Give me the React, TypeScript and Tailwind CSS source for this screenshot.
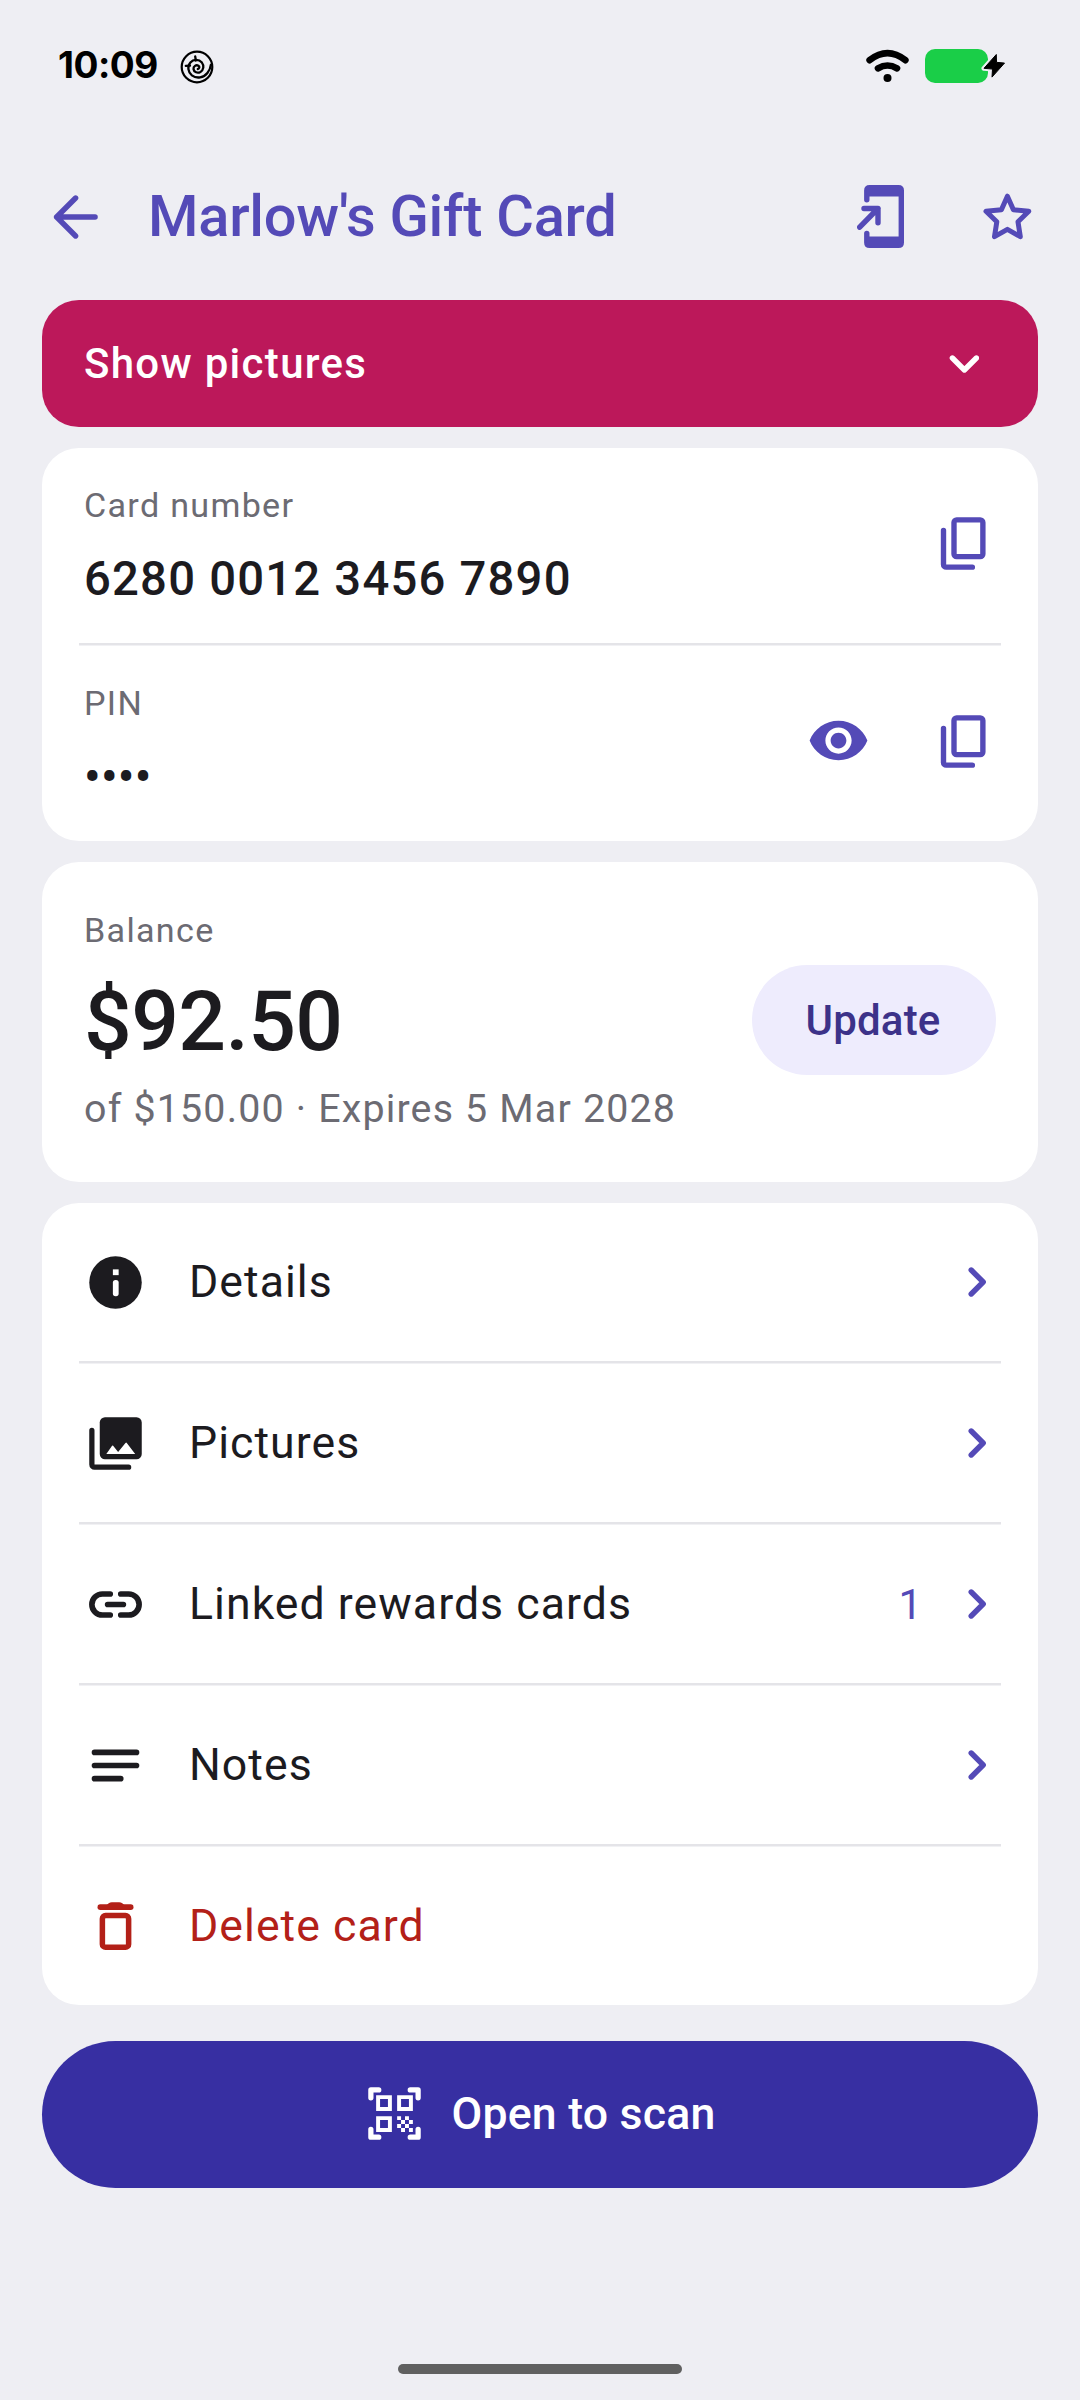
import type { ReactNode } from "react";

const menuItems = [
  { label: "Details", icon: <InfoIcon /> },
  { label: "Pictures", icon: <PicturesIcon /> },
  { label: "Linked rewards cards", icon: <LinkIcon />, count: 1 },
  { label: "Notes", icon: <NotesIcon /> },
];

function InfoIcon() {
  return (
    <svg viewBox="0 0 24 24" className="size-[63px]" fill="currentColor">
      <circle cx="12" cy="12" r="10" />
      <rect x="11" y="7" width="2.2" height="2.2" fill="white" />
      <rect x="11" y="11" width="2.2" height="6.2" rx="1" fill="white" />
    </svg>
  );
}

function PicturesIcon() {
  return (
    <svg viewBox="0 0 24 24" className="size-[63px]" fill="currentColor">
      <path d="M8 2h12a2 2 0 0 1 2 2v12a2 2 0 0 1-2 2H8a2 2 0 0 1-2-2V4a2 2 0 0 1 2-2z" />
      <path d="M3 7v13a1 1 0 0 0 1 1h13" fill="none" stroke="currentColor" strokeWidth="2" strokeLinecap="round" />
      <path d="M8.5 16l2.2-3.1q.2-.3.4 0l1.9 2.3 2.8-3.4q.3-.3.5 0L19.5 16z" fill="white" />
    </svg>
  );
}

function LinkIcon() {
  return (
    <svg viewBox="0 0 24 24" className="size-[63px]" fill="none" stroke="currentColor" strokeWidth="2.15" strokeLinecap="round">
      <path d="M10 8H7a4 4 0 0 0 0 8h3M14 8h3a4 4 0 0 1 0 8h-3M9 12h6" />
    </svg>
  );
}

function NotesIcon() {
  return (
    <svg viewBox="0 0 24 24" className="size-[63px]" fill="none" stroke="currentColor" strokeWidth="2.15" strokeLinecap="round">
      <path d="M4 7h16M4 12h16M4 17h10" />
    </svg>
  );
}

function TrashIcon() {
  return (
    <svg viewBox="0 0 24 24" className="mb-0.5 size-[63px]" fill="none" stroke="currentColor" strokeWidth="2.1" strokeLinecap="round">
      <rect x="7" y="8.2" width="10" height="12.1" rx="1.2" />
      <path d="M6.2 5h11.6" />
      <path d="M8.6 4.3l.8-.8q.6-.4 1.2-.4h2.8q.6 0 1.2.4l.8.8z" fill="currentColor" stroke="none" />
    </svg>
  );
}

function CopyIcon() {
  return (
    <svg viewBox="0 0 24 24" className="size-[63px]" fill="none" stroke="currentColor" strokeWidth="2.05" strokeLinecap="round">
      <rect x="8" y="3" width="11" height="14" rx="1" />
      <path d="M4 7v13a1 1 0 0 0 1 1h10" />
    </svg>
  );
}

function EyeIcon() {
  return (
    <svg viewBox="0 0 24 24" className="mb-0.5 size-[63px]" fill="currentColor">
      <path d="M12 4.5C7 4.5 2.73 7.61 1 12c1.73 4.39 6 7.5 11 7.5s9.27-3.11 11-7.5c-1.73-4.39-6-7.5-11-7.5zM12 17c-2.76 0-5-2.24-5-5s2.24-5 5-5 5 2.24 5 5-2.24 5-5 5zm0-8c-1.66 0-3 1.34-3 3s1.34 3 3 3 3-1.34 3-3-1.34-3-3-3z" />
    </svg>
  );
}

function ScanIcon() {
  return (
    <svg viewBox="0 0 24 24" className="size-[63px]" fill="currentColor">
      <path
        d="M3 6V3h3M18 3h3v3M21 18v3h-3M6 21H3v-3"
        fill="none"
        stroke="currentColor"
        strokeWidth="2"
        strokeLinecap="round"
        strokeLinejoin="round"
      />
      <path d="M9.5 6.5v3h-3v-3h3M11 5H5v6h6V5zm-1.500 9.500v3h-3v-3h3M11 13H5v6h6v-6zm6.500-6.500v3h-3v-3h3M19 5h-6v6h6V5z" />
      <path d="M13 13h1.5v1.5H13zM14.5 14.5H16V16h-1.5zM16 13h1.5v1.5H16zM13 16h1.5v1.5H13zM14.5 17.5H16V19h-1.5zM16 16h1.5v1.5H16zM17.5 14.5H19V16h-1.5zM17.5 17.5H19V19h-1.5z" />
    </svg>
  );
}

function ChevronRight() {
  return (
    <svg viewBox="0 0 18 30" className="mr-[10px] h-[30px] w-[18px] text-[#544ab7]" fill="none" stroke="currentColor" strokeWidth="5.4" strokeLinecap="round" strokeLinejoin="round">
      <path d="M3.2 3l12 12-12 12" />
    </svg>
  );
}

function StatusBar() {
  return (
    <div className="flex h-[134px] items-center pl-[58px] pr-[74px] text-black">
      <span className="mb-1 font-['Inter',sans-serif] text-[37px] leading-[44px] font-bold tracking-[-0.5px]">10:09</span>
      <svg viewBox="0 0 34 34" className="ml-[22px] size-[34px]" fill="none" stroke="currentColor" strokeLinecap="round">
        <circle cx="17" cy="17" r="15.3" strokeWidth="2.2" />
        <path
          d="M17.800 19c1.700-.2 2.100-2.300.6-3.300-2.300-1.300-5.200.6-4.900 3.300.4 3.200 4.100 4.600 6.900 3 3.300-2 3.900-6.400 1.500-9.400-3-3.500-8.500-3.600-11.500-.2-3.300 3.900-2.500 9.900 1.500 13 4.900 3.600 11.900 2.300 15.500-2.400 2.200-2.900 3.200-5.500 3.400-8"
          strokeWidth="2.3"
        />
        <path d="M10 15.600L5.800 15.900M15.800 10.500L15.200 6.300" strokeWidth="2.3" />
      </svg>
      <svg viewBox="0 0 140 34" className="mb-0.5 ml-auto h-[34px] w-[140px]" fill="none">
        <g stroke="currentColor" strokeWidth="6.6" strokeLinecap="round">
          <path d="M3.6 11.2Q21.5-2.8 39.4 11.2" />
          <path d="M12 19.3Q21.5 13.7 31 19.3" />
        </g>
        <circle cx="21.5" cy="29" r="4" fill="currentColor" />
        <rect x="59" y="0" width="63" height="34" rx="10" fill="#1ace48" />
        <path d="M130.3 5.5L118 19.3l8.5.8-.5 8 12.5-14-8-.8z" fill="#000" stroke="#eeeef3" strokeWidth="5" strokeLinejoin="round" />
        <path d="M130.3 5.5L118 19.3l8.5.8-.5 8 12.5-14-8-.8z" fill="#000" stroke="#000" strokeWidth="1" strokeLinejoin="round" />
      </svg>
    </div>
  );
}

function Header() {
  return (
    <header className="flex h-[166px] items-center pl-[53px] pr-12 text-[#544ab7]">
      <svg viewBox="0 0 45 44" className="h-[44px] w-[45px]" fill="none" stroke="currentColor" strokeWidth="5.4" strokeLinecap="round" strokeLinejoin="round">
        <path d="M22.6 3L3.6 22l19 19M3.6 22h38.5" />
      </svg>
      <h1 className="mb-0.5 ml-[50px] text-[57.75px] leading-[68px] font-medium tracking-[-0.25px]">Marlow's Gift Card</h1>
      <svg viewBox="0 0 47 63" className="mb-0.5 ml-auto h-[63px] w-[47px]" fill="none" stroke="currentColor" strokeWidth="5.4" strokeLinecap="round" strokeLinejoin="round">
        <path d="M9.8 14.8V5.5Q9.8 2.7 12.6 2.7H41.5Q44.3 2.7 44.3 5.5V57.5Q44.3 60.3 41.5 60.3H12.6Q9.8 60.3 9.8 57.5V48.5" />
        <path d="M9.8 8h34.5M9.8 55h34.5" strokeWidth="7" strokeLinecap="butt" />
        <path d="M7 23.5h14v14.2M21 23.5L2.7 42.2" />
      </svg>
      <svg viewBox="0 0 49 47" className="mb-0.5 ml-[79px] h-[47px] w-[49px]" fill="none" stroke="currentColor" strokeWidth="5" strokeLinejoin="round">
        <path d="M24.4 3.2L30.4 16.8 45.8 18.2 35 28.8 37.3 43.7 24.4 36.3 11.5 43.7 13.8 28.8 3 18.2 18.4 16.8z" />
      </svg>
    </header>
  );
}

function Divider() {
  return <div className="mx-[37px] h-[2.625px] shrink-0 border-t-2 border-[#e4e4e8] bg-[#f1f1f4]" />;
}

function Field({ label, value, children }: { label: string; value: ReactNode; children: ReactNode }) {
  return (
    <div className="flex h-[195px] items-center justify-between px-[42px]">
      <div>
        <p className="text-[34.125px] leading-[44px] tracking-[1.3px] text-[#6c6b73]">{label}</p>
        <p className="mt-[22px] text-[47.25px] leading-[60px] font-medium tracking-[1.2px]">{value}</p>
      </div>
      <div className="mb-[5px] flex items-center gap-[63px] text-[#544ab7]">{children}</div>
    </div>
  );
}

export default function App() {
  return (
    <div className="flex h-[2400px] w-[1080px] flex-col bg-[#eeeef3] font-['Roboto',sans-serif] text-[#1c1b1f]">
      <StatusBar />
      <Header />

      <main className="flex flex-col px-[42px]">
        {/* Pictures toggle */}
        <button className="flex h-[127px] items-center justify-between rounded-[37px] bg-[#bc185a] pr-[59px] pl-[42px] text-white">
          <span className="text-[42px] leading-[50px] font-medium tracking-[1.3px]">Show pictures</span>
          <svg viewBox="0 0 30 18" className="h-[18px] w-[30px]" fill="none" stroke="currentColor" strokeWidth="5.4" strokeLinecap="round" strokeLinejoin="round">
            <path d="M3.4 3l12 12 12-12" />
          </svg>
        </button>

        {/* Card number and PIN */}
        <section className="mt-[21px] h-[393px] rounded-[37px] bg-white">
          <Field label="Card number" value="6280 0012 3456 7890">
            <CopyIcon />
          </Field>
          <Divider />
          <div className="pt-px">
            <Field label="PIN" value={<span className="tracking-[0.4px]">••••</span>}>
              <EyeIcon />
              <CopyIcon />
            </Field>
          </div>
        </section>

        {/* Balance */}
        <section className="mt-[21px] flex h-[320px] items-center justify-between rounded-[37px] bg-white px-[42px]">
          <div className="mb-0.5">
            <p className="text-[34.125px] leading-[44px] tracking-[1.3px] text-[#6c6b73]">Balance</p>
            <p className="mt-[21px] text-[84px] leading-[98px] font-medium tracking-[-0.6px]">$92.50</p>
            <p className="mt-3 text-[39.375px] leading-[52px] tracking-[1.18px] text-[#6c6b73]">of $150.00 · Expires 5 Mar 2028</p>
          </div>
          <button className="mb-1 h-[110px] w-[244px] rounded-full bg-[#eeecfd] pr-0.5 text-[42px] font-medium tracking-[0.2px] text-[#3c3289]">Update</button>
        </section>

        {/* Actions */}
        <section className="mt-[21px] h-[802px] rounded-[37px] bg-white">
          {menuItems.map((item) => (
            <div key={item.label}>
              <button className="flex h-[158.4px] w-full items-center px-[42px]">
                {item.icon}
                <span className="ml-[42px] text-[44.625px] leading-[54px] tracking-[1.04px]">{item.label}</span>
                <span className="ml-auto flex items-center">
                  {item.count && <span className="mr-[46px] text-[42px] text-[#544ab7]">{item.count}</span>}
                  <ChevronRight />
                </span>
              </button>
              <Divider />
            </div>
          ))}
          <button className="flex h-[158px] w-full items-center px-[42px] text-[#b32018]">
            <TrashIcon />
            <span className="ml-[42px] text-[44.625px] leading-[54px] tracking-[1.04px]">Delete card</span>
          </button>
        </section>

        <button className="mt-9 flex h-[147px] items-center justify-center gap-[26px] rounded-full bg-[#372fa2] pr-0.5 pb-0.5 text-white">
          <ScanIcon />
          <span className="text-[44.625px] leading-[54px] font-medium tracking-[0.2px]">Open to scan</span>
        </button>
      </main>

      <div className="mx-auto mt-auto mb-[26px] h-[10px] w-[284px] rounded-full bg-[#606060]" />
    </div>
  );
}
